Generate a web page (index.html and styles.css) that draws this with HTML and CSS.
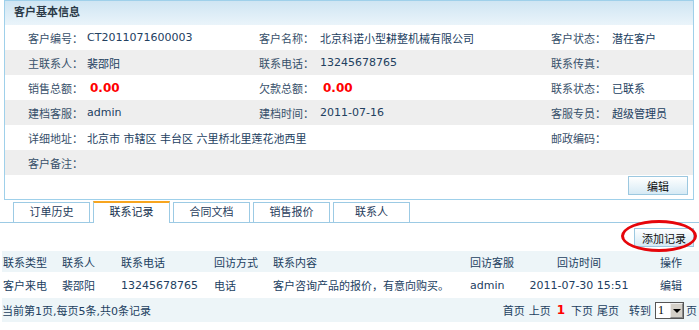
FILE: index.html
```html
<!DOCTYPE html>
<html lang="zh-CN">

<head>
    <meta charset="UTF-8">
    <title>客户详情</title>
    <link rel="stylesheet" href="styles.css">
</head>

<body>
    <div class="panel">
        <div class="panel-head">客户基本信息</div>

        <div class="info-row">
            <span class="lbl">客户编号：</span><span class="val">CT2011071600003</span>
            <span class="lbl">客户名称：</span><span class="val">北京科诺小型耕整机械有限公司</span>
            <span class="lbl">客户状态：</span><span class="val">潜在客户</span>
        </div>
        <div class="info-row">
            <span class="lbl">主联系人：</span><span class="val">裴邵阳</span>
            <span class="lbl">联系电话：</span><span class="val">13245678765</span>
            <span class="lbl">联系传真：</span><span class="val"></span>
        </div>
        <div class="info-row">
            <span class="lbl">销售总额：</span><span class="val money">0.00</span>
            <span class="lbl">欠款总额：</span><span class="val money">0.00</span>
            <span class="lbl">联系状态：</span><span class="val">已联系</span>
        </div>
        <div class="info-row">
            <span class="lbl">建档客服：</span><span class="val">admin</span>
            <span class="lbl">建档时间：</span><span class="val">2011-07-16</span>
            <span class="lbl">客服专员：</span><span class="val">超级管理员</span>
        </div>
        <div class="info-row">
            <span class="lbl">详细地址：</span><span class="val wide">北京市 市辖区 丰台区 六里桥北里莲花池西里</span>
            <span class="lbl">邮政编码：</span><span class="val"></span>
        </div>
        <div class="info-row">
            <span class="lbl">客户备注：</span><span class="val"></span>
        </div>

        <div class="panel-foot">
            <button class="btn">编辑</button>
        </div>
    </div>

    <div class="tabs">
        <div class="tab">订单历史</div>
        <div class="tab active">联系记录</div>
        <div class="tab">合同文档</div>
        <div class="tab">销售报价</div>
        <div class="tab">联系人</div>
    </div>

    <div class="toolbar">
        <button class="btn">添加记录</button>
        <!-- red mark drawn round the add button -->
        <div class="mark"></div>
    </div>

    <table class="records">
        <colgroup>
            <col style="width: 60px">
            <col style="width: 59px">
            <col style="width: 93px">
            <col style="width: 59px">
            <col style="width: 197px">
            <col style="width: 45px">
            <col style="width: 128px">
            <col>
        </colgroup>
        <thead>
            <tr>
                <th>联系类型</th>
                <th>联系人</th>
                <th>联系电话</th>
                <th>回访方式</th>
                <th>联系内容</th>
                <th>回访客服</th>
                <th class="center">回访时间</th>
                <th class="center">操作</th>
            </tr>
        </thead>
        <tbody>
            <tr>
                <td>客户来电</td>
                <td>裴邵阳</td>
                <td>13245678765</td>
                <td>电话</td>
                <td>客户咨询产品的报价，有意向购买。</td>
                <td>admin</td>
                <td class="center">2011-07-30 15:51</td>
                <td class="center">编辑</td>
            </tr>
        </tbody>
    </table>

    <div class="pager">
        <span>当前第1页,每页5条,共0条记录</span>
        <div class="pages">
            <span>首页</span>
            <span>上页</span>
            <span class="current">1</span>
            <span>下页</span>
            <span>尾页</span>
            <span class="goto">转到</span>
            <span class="fake-select"><span class="sel-val">1</span><span class="sel-btn"></span></span>
            <span>页</span>
        </div>
    </div>
</body>

</html>
```

FILE: styles.css
```css
body {
    font-family: "DejaVu Sans", "Noto Sans CJK SC", sans-serif;
    font-size: 11px;
    color: #22405f;
    background-color: #fff;
    margin: 0;
}

.panel {
    margin: 0 5px 0 4px;
    border: 1px solid #9fd0ea;
}

.panel-head {
    height: 24px;
    line-height: 24px;
    padding-left: 9px;
    font-weight: bold;
    color: #2b3a48;
    background: linear-gradient(#cfe5f3, #eaf4fa);
}

.info-row {
    display: grid;
    grid-template-columns: 59px 172px 61px 231px 61px auto;
    align-items: center;
    height: 25px;
    padding-left: 23px;
    background: #fff;
}

.info-row:nth-of-type(odd) {
    background: #eeeeee;
}

.lbl {
    color: #37506a;
}

.val.wide {
    grid-column: span 3;
}

.money {
    padding-left: 3px;
    color: #f00;
    font-weight: bold;
    font-size: 12px;
}

.panel-foot {
    display: flex;
    justify-content: flex-end;
    height: 24px;
    padding: 1px 5px 0 0;
    box-sizing: border-box;
}

.btn {
    width: 60px;
    height: 19px;
    padding: 0;
    font-family: "DejaVu Sans", "Noto Sans CJK SC", sans-serif;
    font-size: 11px;
    color: #111;
    border: 1px solid #9cc8e0;
    background: linear-gradient(#ffffff, #d6eaf5);
}

.tabs {
    display: flex;
    gap: 3px;
    height: 21px;
    margin-top: 1px;
    padding-left: 13px;
    border-bottom: 1px solid #9ccae4;
}

.tab {
    width: 77px;
    height: 20px;
    margin-top: 1px;
    box-sizing: border-box;
    border: 1px solid #9ccae4;
    border-bottom: none;
    text-align: center;
    line-height: 19px;
    background: #fff;
    color: #1f3c5c;
}

.tab.active {
    height: 22px;
    margin-top: 0;
    border-top: 2px solid #f7a51f;
    color: #132f4e;
}

.toolbar {
    position: relative;
    display: flex;
    justify-content: flex-end;
    height: 28px;
    padding: 5px 5px 0 0;
    box-sizing: border-box;
}

.mark {
    position: absolute;
    top: -3px;
    right: 2px;
    width: 76px;
    height: 32px;
    box-sizing: border-box;
    border: 3px solid #e6060b;
    border-radius: 50%;
}

.records {
    width: calc(100% - 2px);
    margin-left: 2px;
    border-collapse: collapse;
    table-layout: fixed;
}

.records th,
.records td {
    padding: 0;
    text-align: left;
    font-weight: normal;
    white-space: nowrap;
}

.records th:first-child,
.records td:first-child {
    padding-left: 1px;
}

.records thead tr {
    height: 21px;
    background: #edf5f8;
}

.records tbody tr {
    height: 26px;
}

.records .center {
    text-align: center;
}

.pager {
    display: flex;
    justify-content: space-between;
    align-items: center;
    height: 24px;
    margin-left: 2px;
    padding-right: 2px;
    background: #edf5f8;
}

.pages {
    display: flex;
    align-items: center;
    gap: 4px;
}

.pages .current {
    color: #f00;
    font-weight: bold;
    font-size: 12px;
    margin: 0 2px;
}

.pages .goto {
    margin-left: 6px;
}

.fake-select {
    display: flex;
    align-items: center;
    width: 29px;
    height: 17px;
    box-sizing: border-box;
    border: 1px solid #555;
    background: #fff;
    margin-right: -2px;
}

.sel-val {
    flex: 1;
    padding-left: 2px;
    font-family: "Liberation Serif", serif;
    font-size: 12px;
    color: #000;
}

.sel-btn {
    position: relative;
    width: 13px;
    height: 15px;
    box-sizing: border-box;
    border: 1px solid #888;
    border-top-color: #eee;
    border-left-color: #eee;
    background: #d4d0c8;
}

.sel-btn::after {
    content: "";
    position: absolute;
    left: 2px;
    top: 5px;
    border-left: 4px solid transparent;
    border-right: 4px solid transparent;
    border-top: 4px solid #000;
}
```
